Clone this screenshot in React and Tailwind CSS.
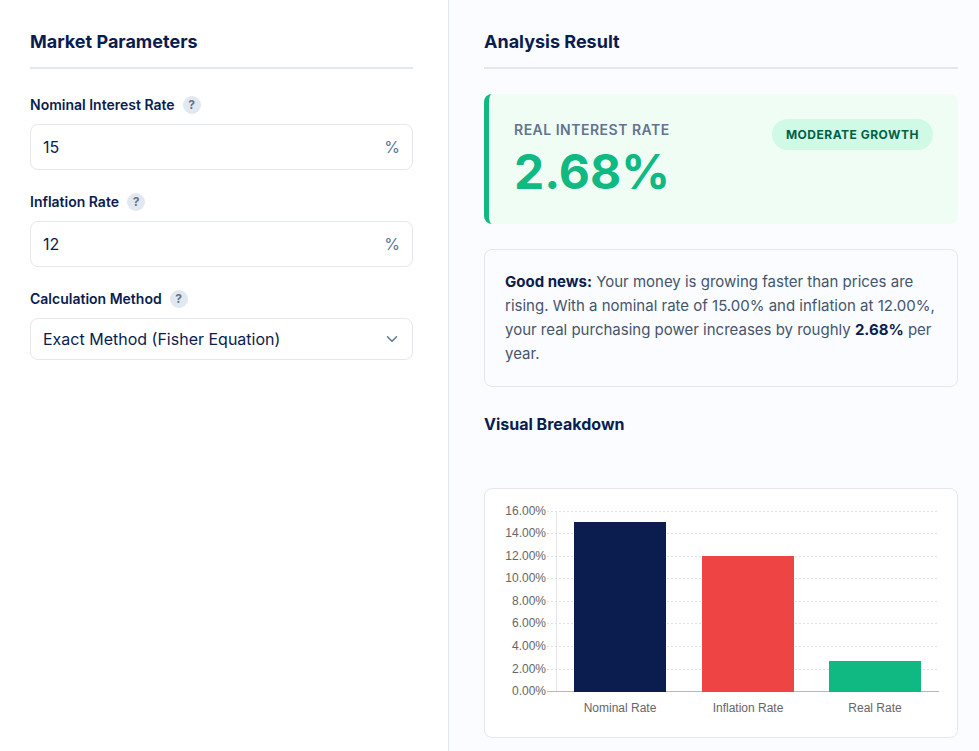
import { useState } from "react";
import { ChevronDown } from "lucide-react";

function SectionTitle({ children }) {
  return (
    <h2 className="mb-[25px] border-b-2 border-slate-200 pb-[13px] text-lg leading-6 font-bold text-[#0a1d4e]">
      {children}
    </h2>
  );
}

function FieldLabel({ htmlFor, help, children }) {
  return (
    <div className="mb-2 flex h-[22px] items-center gap-2">
      <label htmlFor={htmlFor} className="text-sm font-semibold text-[#0a1d4e]">
        {children}
      </label>
      <button
        type="button"
        aria-label={help}
        className="flex size-[18px] items-center justify-center rounded-full bg-slate-200 text-xs font-bold text-slate-500"
      >
        ?
      </button>
    </div>
  );
}

function PercentField({ id, label, value, onChange }) {
  return (
    <div>
      <FieldLabel htmlFor={id} help={`About ${label}`}>
        {label}
      </FieldLabel>
      <div className="flex h-[46px] items-center rounded-lg border border-slate-200 bg-white px-3">
        <input
          id={id}
          type="text"
          inputMode="decimal"
          value={value}
          onChange={(e) => onChange(e.target.value)}
          className="min-w-0 flex-1 bg-transparent text-base text-[#0a1d4e] outline-none"
        />
        <span className="text-base text-slate-500">%</span>
      </div>
    </div>
  );
}

const TICKS = [
  ["16.00%", 4],
  ["14.00%", 26],
  ["12.00%", 49],
  ["10.00%", 71],
  ["8.00%", 94],
  ["6.00%", 116],
  ["4.00%", 139],
  ["2.00%", 162],
];

const BARS = [
  { name: "Nominal Rate", x: 71, y: 15, fill: "#0a1d4e" },
  { name: "Inflation Rate", x: 199, y: 49, fill: "#ef4444" },
  { name: "Real Rate", x: 326, y: 154, fill: "#10b981" },
];

function RateChart() {
  return (
    <svg
      viewBox="0 0 436 212"
      role="img"
      aria-label="Nominal, inflation and real rates"
      className="block w-full overflow-visible font-['Liberation_Sans',Arial,sans-serif] text-[12px]"
    >
      {TICKS.map(([label, y]) => (
        <g key={label}>
          <path d={`M44 ${y + 0.5}H436`} stroke="#e0e0e0" strokeDasharray="2 2" />
          <text x="43" y={y + 4} textAnchor="end" fill="#666">
            {label}
          </text>
        </g>
      ))}
      <path d="M53.5 4V184" stroke="#e5e5e5" />
      <path d="M44 184.5H436" stroke="#b8b8b8" />
      <text x="43" y="188" textAnchor="end" fill="#666">
        0.00%
      </text>
      {BARS.map((b) => (
        <g key={b.name}>
          <rect x={b.x} y={b.y} width="92" height={185 - b.y} fill={b.fill} />
          <text x={b.x + 46} y="205" textAnchor="middle" fill="#666">
            {b.name}
          </text>
        </g>
      ))}
    </svg>
  );
}

export default function App() {
  const [nominal, setNominal] = useState("15");
  const [inflation, setInflation] = useState("12");

  return (
    <main className="grid min-h-screen grid-cols-[448fr_531fr] bg-white font-['Inter',sans-serif] text-[#0a1d4e]">
      <section className="pt-[30px] pr-[35px] pl-[30px]">
        <SectionTitle>Market Parameters</SectionTitle>
        <div className="flex flex-col gap-[21px]">
          <PercentField id="nominal" label="Nominal Interest Rate" value={nominal} onChange={setNominal} />
          <PercentField id="inflation" label="Inflation Rate" value={inflation} onChange={setInflation} />
          <div>
            <FieldLabel htmlFor="method" help="About Calculation Method">
              Calculation Method
            </FieldLabel>
            <div className="grid items-center">
              <select
                id="method"
                className="col-start-1 row-start-1 h-[42px] w-full appearance-none rounded-lg border border-slate-200 bg-white px-3 text-base text-[#0a1d4e] outline-none"
              >
                <option>Exact Method (Fisher Equation)</option>
                <option>Approximate Method</option>
              </select>
              <ChevronDown
                aria-hidden="true"
                className="pointer-events-none col-start-1 row-start-1 mr-3 size-[18px] justify-self-end text-slate-500"
              />
            </div>
          </div>
        </div>
      </section>

      <section className="border-l border-slate-200 bg-[#fafcff] pt-[30px] pr-[21px] pb-[13px] pl-[35px]">
        <SectionTitle>Analysis Result</SectionTitle>

        <div className="mb-[25px] flex items-start justify-between rounded-lg border-l-5 border-[#10b981] bg-[#f0fdf4] p-[25px]">
          <div>
            <h3 className="mb-1 text-sm leading-[22px] font-semibold tracking-[0.5px] text-slate-500 uppercase">
              Real Interest Rate
            </h3>
            <p className="text-5xl leading-[54px] font-bold text-[#10b981]">2.68%</p>
          </div>
          <span className="rounded-full bg-emerald-100 px-3.5 text-xs leading-[31px] font-bold tracking-[0.5px] text-emerald-800 uppercase">
            Moderate Growth
          </span>
        </div>

        <p className="mb-[25px] rounded-lg border border-slate-200 bg-[#fafcff] p-5 text-[15px] leading-6 text-slate-600">
          <strong className="font-bold text-[#0a1d4e]">Good news:</strong> Your money is growing faster than prices are
          rising. With a nominal rate of 15.00% and inflation at 12.00%, your real purchasing power increases by roughly{" "}
          <strong className="font-bold text-[#0a1d4e]">2.68%</strong> per year.
        </p>

        <h3 className="mb-[52px] text-base leading-6 font-bold">Visual Breakdown</h3>

        <div className="rounded-lg border border-slate-200 bg-white p-[18px]">
          <RateChart />
        </div>
      </section>
    </main>
  );
}
